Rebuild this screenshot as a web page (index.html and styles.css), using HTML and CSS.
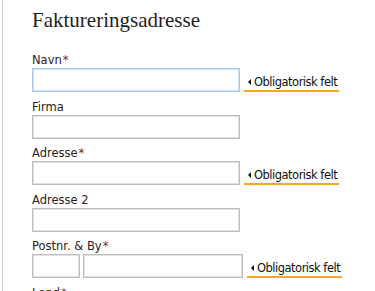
FILE: index.html
```html
<!DOCTYPE html>
<html lang="da">
<head>
  <meta charset="UTF-8" />
  <meta name="viewport" content="width=device-width, initial-scale=1.0"/>
  <title>Faktureringsadresse</title>
  <link rel="stylesheet" href="styles.css">
</head>
<body>
  <div class="panel">
    <h2 class="panel-title">Faktureringsadresse</h2>

    <form class="address-form">
      <div class="field">
        <label>Navn<span class="req">*</span></label>
        <div class="field-row">
          <input type="text" class="inp inp-focus" />
          <span class="notice">Obligatorisk felt</span>
        </div>
      </div>

      <div class="field">
        <label>Firma</label>
        <div class="field-row">
          <input type="text" class="inp" />
        </div>
      </div>

      <div class="field">
        <label>Adresse<span class="req">*</span></label>
        <div class="field-row">
          <input type="text" class="inp" />
          <span class="notice">Obligatorisk felt</span>
        </div>
      </div>

      <div class="field">
        <label>Adresse 2</label>
        <div class="field-row">
          <input type="text" class="inp" />
        </div>
      </div>

      <div class="field">
        <label>Postnr. &amp; By<span class="req">*</span></label>
        <div class="field-row">
          <input type="text" class="inp inp-zip" />
          <input type="text" class="inp inp-city" />
          <span class="notice">Obligatorisk felt</span>
        </div>
      </div>

      <div class="field">
        <label>Land<span class="req">*</span></label>
        <div class="field-row">
          <input type="text" class="inp" />
        </div>
      </div>
    </form>
  </div>
</body>
</html>
```

FILE: styles.css
```css
/* Faktureringsadresse - formular */
body {
  margin: 0;
  padding: 0 0 0 2px;
  background: #fff;
  height: 291px;
  overflow: hidden;
}

.panel {
  border-left: 1px solid #c9c9c9;
  padding: 8px 0 0 29px;
  min-height: 100%;
}

.panel-title {
  margin: 0 0 21px;
  font-family: "Liberation Serif", serif;
  font-weight: normal;
  font-size: 21px;
  line-height: 24px;
  color: #1e1e1e;
}

/* Felter */
.field {
  margin-bottom: 7.5px;
}

.field label {
  display: block;
  font-family: "DejaVu Sans", sans-serif;
  font-size: 11.5px;
  line-height: 14px;
  color: #2c2118;
  margin-bottom: 1px;
}

.field .req {
  color: #7b2a18;
  margin-left: 1px;
}

.field-row {
  display: flex;
  align-items: flex-end;
}

.inp {
  box-sizing: border-box;
  width: 208px;
  height: 24px;
  margin: 0;
  padding: 2px 4px;
  border: 1px solid #bdbdbd;
  box-shadow: inset 0 0 0 1px #e2e2e2;
  background: #fff;
  outline: none;
}

/* Felt med fokus (blå kant) */
.inp-focus {
  border-color: #a9c6e6;
  box-shadow: inset 0 0 0 1px #d3e3f4;
}

.inp-zip {
  width: 48px;
}
.inp-city {
  width: 160px;
  margin-left: 3px;
}

/* "Obligatorisk felt" med pil og orange streg */
.notice {
  display: inline-flex;
  align-items: center;
  margin-left: 4px;
  padding: 0 2px 1px 4px;
  border-bottom: 2px solid #f5a823;
  font-family: "DejaVu Sans", sans-serif;
  font-size: 11.5px;
  letter-spacing: -0.5px;
  line-height: 14px;
  color: #111;
}
.notice::before {
  content: "";
  display: inline-block;
  width: 0;
  height: 0;
  border-top: 3px solid transparent;
  border-bottom: 3px solid transparent;
  border-right: 3px solid #111;
  margin-right: 3px;
}
```
